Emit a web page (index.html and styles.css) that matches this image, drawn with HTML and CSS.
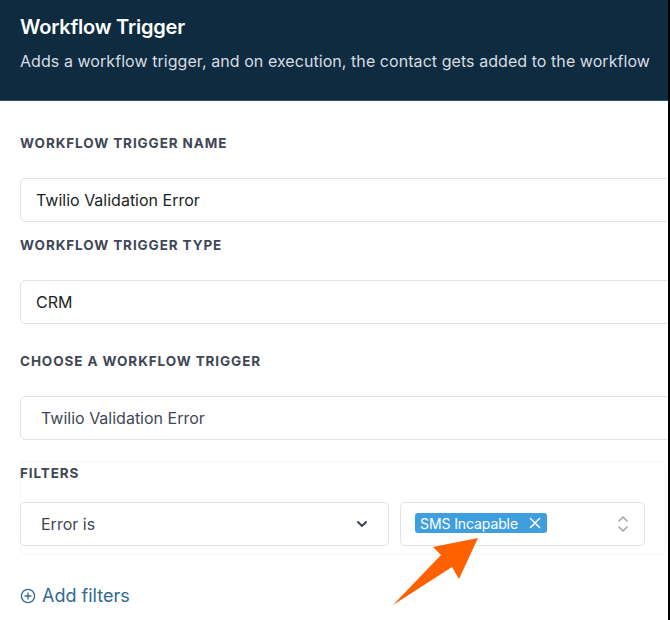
FILE: index.html
```html
<!DOCTYPE html>
<html>
<head>
<meta charset="utf-8">
<link rel="stylesheet" href="styles.css">
</head>
<body>
<div class="frame">
  <header class="header">
    <h1 class="title">Workflow Trigger</h1>
    <p class="subtitle">Adds a workflow trigger, and on execution, the contact gets added to the workflow</p>
  </header>
  <main class="content">
    <div class="field field-name">
      <div class="label">Workflow Trigger Name</div>
      <div class="input">Twilio Validation Error</div>
    </div>
    <div class="field field-type">
      <div class="label">Workflow Trigger Type</div>
      <div class="input">CRM</div>
    </div>
    <div class="field field-choose">
      <div class="label">Choose a Workflow Trigger</div>
      <div class="input input-muted">Twilio Validation Error</div>
    </div>
    <section class="filters">
      <div class="label">Filters</div>
      <div class="filter-row">
        <div class="select select-left">
          <span class="select-text">Error is</span>
          <svg class="chev" width="14" height="14" viewBox="0 0 14 14"><path d="M3 5l4 4 4-4" fill="none" stroke="#3f4756" stroke-width="2" stroke-linecap="round" stroke-linejoin="round"/></svg>
        </div>
        <div class="select select-right">
          <span class="tag">SMS Incapable
            <svg class="tag-x" width="12" height="12" viewBox="0 0 12 12"><path d="M1.5 1.5l9 9M10.5 1.5l-9 9" stroke="#fff" stroke-width="1.6" stroke-linecap="round"/></svg>
          </span>
          <svg class="updown" width="12" height="18" viewBox="0 0 12 18"><path d="M2 6l4-4 4 4M2 12l4 4 4-4" fill="none" stroke="#9aa3ae" stroke-width="1.5" stroke-linecap="round" stroke-linejoin="round"/></svg>
        </div>
      </div>
    </section>
    <div class="add-filters">
      <svg width="16" height="16" viewBox="0 0 16 16"><circle cx="8" cy="8" r="6.6" fill="none" stroke="#2e6a92" stroke-width="1.3"/><path d="M8 4.6v6.8M4.6 8h6.8" stroke="#2e6a92" stroke-width="1.3"/></svg>
      <span>Add filters</span>
    </div>
  </main>
  <svg class="arrow" width="100" height="80" viewBox="390 530 100 80"><polygon points="478,538 459,579 452,567 393,605 441,555 433,547" fill="#ff6000"/></svg>
</div>
</body>
</html>
```

FILE: styles.css
```css
* { box-sizing: border-box; }
html, body { margin: 0; padding: 0; }
body {
  width: 670px;
  height: 620px;
  overflow: hidden;
  background: #fff;
  font-family: Inter, "Noto Sans", sans-serif;
}
.frame {
  position: relative;
  width: 670px;
  height: 620px;
  border-right: 2px solid #000;
  overflow: hidden;
}
.header {
  height: 101px;
  background: #0e2b40;
  border-bottom: 1px solid #3a5569;
  padding: 14px 20px 0;
}
.title {
  margin: 0;
  color: #fff;
  font-size: 20px;
  font-weight: 600;
  line-height: 26px;
  letter-spacing: -0.2px;
}
.subtitle {
  margin: 11px 0 0;
  color: #d6dde3;
  font-size: 16px;
  line-height: 20px;
  letter-spacing: 0.06px;
  white-space: nowrap;
}
.content {
  padding-left: 20px;
  width: 720px;
}
.label {
  color: #3f4756;
  font-size: 13.5px;
  font-weight: 700;
  line-height: 16px;
  letter-spacing: 0.9px;
  text-transform: uppercase;
}
.field-name { margin-top: 34px; }
.field-type { margin-top: 15px; }
.field-choose { margin-top: 29px; }
.input {
  margin-top: 27px;
  height: 44px;
  border: 1px solid #e2e4e8;
  border-radius: 5px;
  padding: 0 15px;
  display: flex;
  align-items: center;
  font-size: 16px;
  color: #1c1f24;
}
.input-muted {
  color: #3f4756;
  padding-left: 20px;
}
.filters {
  margin-top: 21px;
  width: 646px;
  height: 94px;
  border: 1px solid #f4f5f7;
  border-radius: 6px;
  padding-top: 3px;
}
.filters .label { margin-left: -1px; }
.filter-row {
  display: flex;
  gap: 11px;
  margin-top: 21px;
  margin-left: -1px;
}
.select {
  height: 44px;
  border: 1px solid #dfe2e6;
  border-radius: 5px;
  display: flex;
  align-items: center;
  justify-content: space-between;
}
.select-left {
  width: 369px;
  padding: 0 19px 0 20px;
  font-size: 16px;
  color: #3f4756;
}
.chev { display: block; }
.select-right {
  width: 245px;
  padding: 0 15px 0 14px;
  align-items: flex-start;
}
.tag {
  margin-top: 10px;
  height: 20px;
  display: inline-flex;
  align-items: center;
  gap: 11px;
  background: #3f9fde;
  color: #fff;
  font-size: 14px;
  border-radius: 3px;
  padding: 0 6px 0 5px;
  letter-spacing: -0.1px;
}
.tag-x { display: block; }
.updown { margin-top: 12px; display: block; }
.add-filters {
  margin-top: 30px;
  display: flex;
  align-items: center;
  gap: 6px;
  color: #2e6a92;
  font-size: 18px;
}
.add-filters svg { display: block; }
.arrow {
  position: absolute;
  left: 390px;
  top: 530px;
}
```
